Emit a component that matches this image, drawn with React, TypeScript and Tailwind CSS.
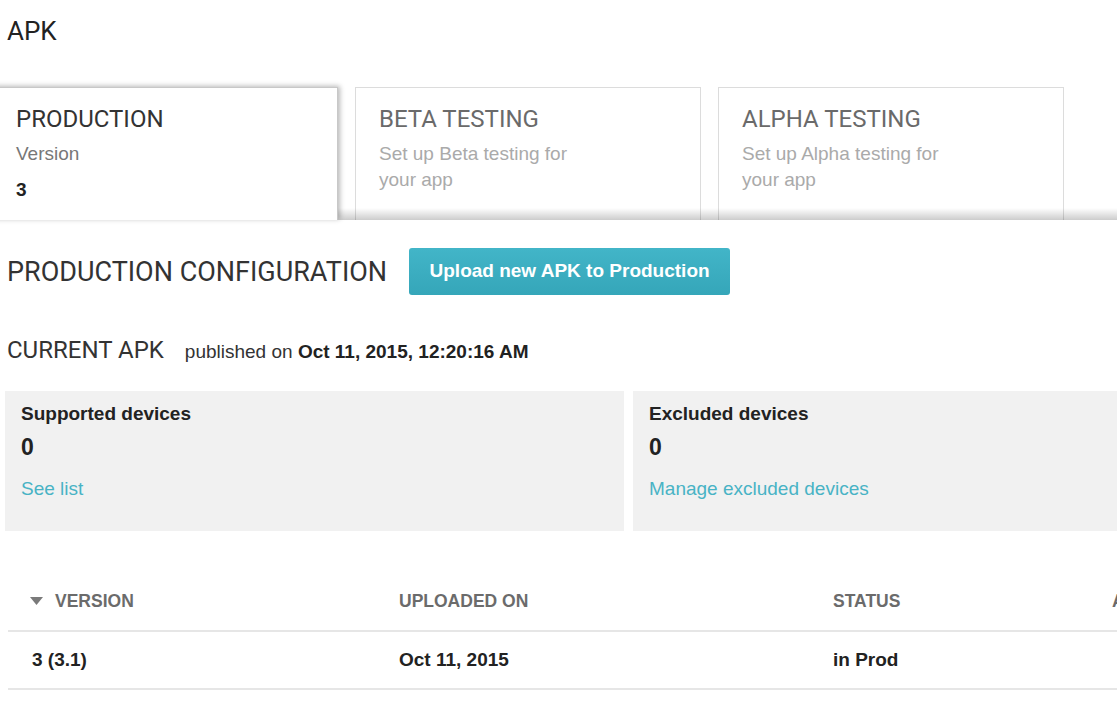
const heading = "font-['Roboto',sans-serif] font-normal";

function Tab({ title, active, children }: { title: string; active?: boolean; children: React.ReactNode }) {
  return (
    <div
      className={
        active
          ? "relative z-10 h-[133px] w-[346px] shrink-0 border border-b-0 border-[#c8c8c8] bg-white pl-[23px] pt-[17px] shadow-[2px_-1px_5px_rgba(0,0,0,0.28)]"
          : "h-[133px] w-[346px] shrink-0 border border-b-0 border-[#dcdcdc] bg-white pl-[23px] pt-[17px]"
      }
    >
      <div className={`${heading} text-[24px] leading-[28px] ${active ? "text-[#333]" : "text-[#6a6a6a]"}`}>
        {title}
      </div>
      {children}
    </div>
  );
}

function DeviceBox({ label, count, link }: { label: string; count: string; link: string }) {
  return (
    <div className="h-[140px] w-[619px] shrink-0 bg-[#f1f1f1] pl-[16px] pt-[10px]">
      <div className="text-[19px] font-bold leading-[26px] text-[#222]">{label}</div>
      <div className="mt-[4px] text-[23px] font-bold leading-[32px] text-[#222]">{count}</div>
      <a href="#" className="mt-[13px] block text-[19px] leading-[26px] text-[#48b3c5]">
        {link}
      </a>
    </div>
  );
}

export default function App() {
  return (
    <div className="h-[722px] w-[1117px] overflow-hidden bg-white font-['Liberation_Sans',Arial,sans-serif] text-[#222]">
      <div className="w-[1300px]">
        <h1 className={`${heading} ml-[7px] mt-[16px] text-[26px] leading-[30px] text-[#222]`}>APK</h1>

        {/* track tabs */}
        <div className="-ml-2 mt-[41px] flex gap-[17px]">
          <Tab title="PRODUCTION" active>
            <div className="mt-[8px] text-[19px] leading-[26px] text-[#777]">Version</div>
            <div className="mt-[10px] text-[19px] font-bold leading-[26px] text-[#222]">3</div>
          </Tab>
          <Tab title="BETA TESTING">
            <div className="mt-[8px] w-[210px] text-[19px] leading-[26px] text-[#aaa]">
              Set up Beta testing for your app
            </div>
          </Tab>
          <Tab title="ALPHA TESTING">
            <div className="mt-[8px] w-[215px] text-[19px] leading-[26px] text-[#aaa]">
              Set up Alpha testing for your app
            </div>
          </Tab>
        </div>
        <div className="relative -mt-[12px] h-[12px] bg-linear-to-b from-transparent to-black/20" />

        <div className="mt-[28px] flex h-[47px] items-center pl-[7px]">
          <h2 className={`${heading} text-[27px] leading-[32px] text-[#333]`}>PRODUCTION CONFIGURATION</h2>
          <button
            type="button"
            className="ml-[22px] h-[47px] w-[321px] rounded-[3px] bg-linear-to-b from-[#42b5c8] to-[#35a6b9] text-[19px] font-bold text-white"
          >
            Upload new APK to Production
          </button>
        </div>

        <div className="mt-[41px] flex h-[28px] items-baseline pl-[7px]">
          <h3 className={`${heading} text-[24px] leading-[28px] text-[#333]`}>CURRENT APK</h3>
          <span className="ml-[21px] text-[19px] text-[#333]">
            published on <b className="text-[#222]">Oct 11, 2015, 12:20:16 AM</b>
          </span>
        </div>

        <div className="mt-[27px] flex gap-[9px] pl-[5px]">
          <DeviceBox label="Supported devices" count="0" link="See list" />
          <DeviceBox label="Excluded devices" count="0" link="Manage excluded devices" />
        </div>

        {/* version table */}
        <div className="ml-[8px] mt-[41px]">
          <div className="grid h-[60px] grid-cols-[367px_434px_279px_220px] items-center border-b-2 border-[#e6e6e6] text-[17.5px] font-bold uppercase text-[#6b6b6b]">
            <div className="flex items-center gap-[12px] pl-[22px]">
              <svg width="13" height="8" viewBox="0 0 13 8" aria-hidden="true">
                <path d="M0 0h13L6.5 8z" fill="#7a7a7a" />
              </svg>
              <span>Version</span>
            </div>
            <div className="pl-[24px]">Uploaded on</div>
            <div className="pl-[24px]">Status</div>
            <div className="pl-[24px]">Actions</div>
          </div>
          <div className="grid h-[58px] grid-cols-[367px_434px_279px_220px] items-center border-b-2 border-[#e6e6e6] text-[19px] font-bold text-[#222]">
            <div className="pl-[24px]">3 (3.1)</div>
            <div className="pl-[24px]">Oct 11, 2015</div>
            <div className="pl-[24px]">in Prod</div>
            <div />
          </div>
        </div>
      </div>
    </div>
  );
}
